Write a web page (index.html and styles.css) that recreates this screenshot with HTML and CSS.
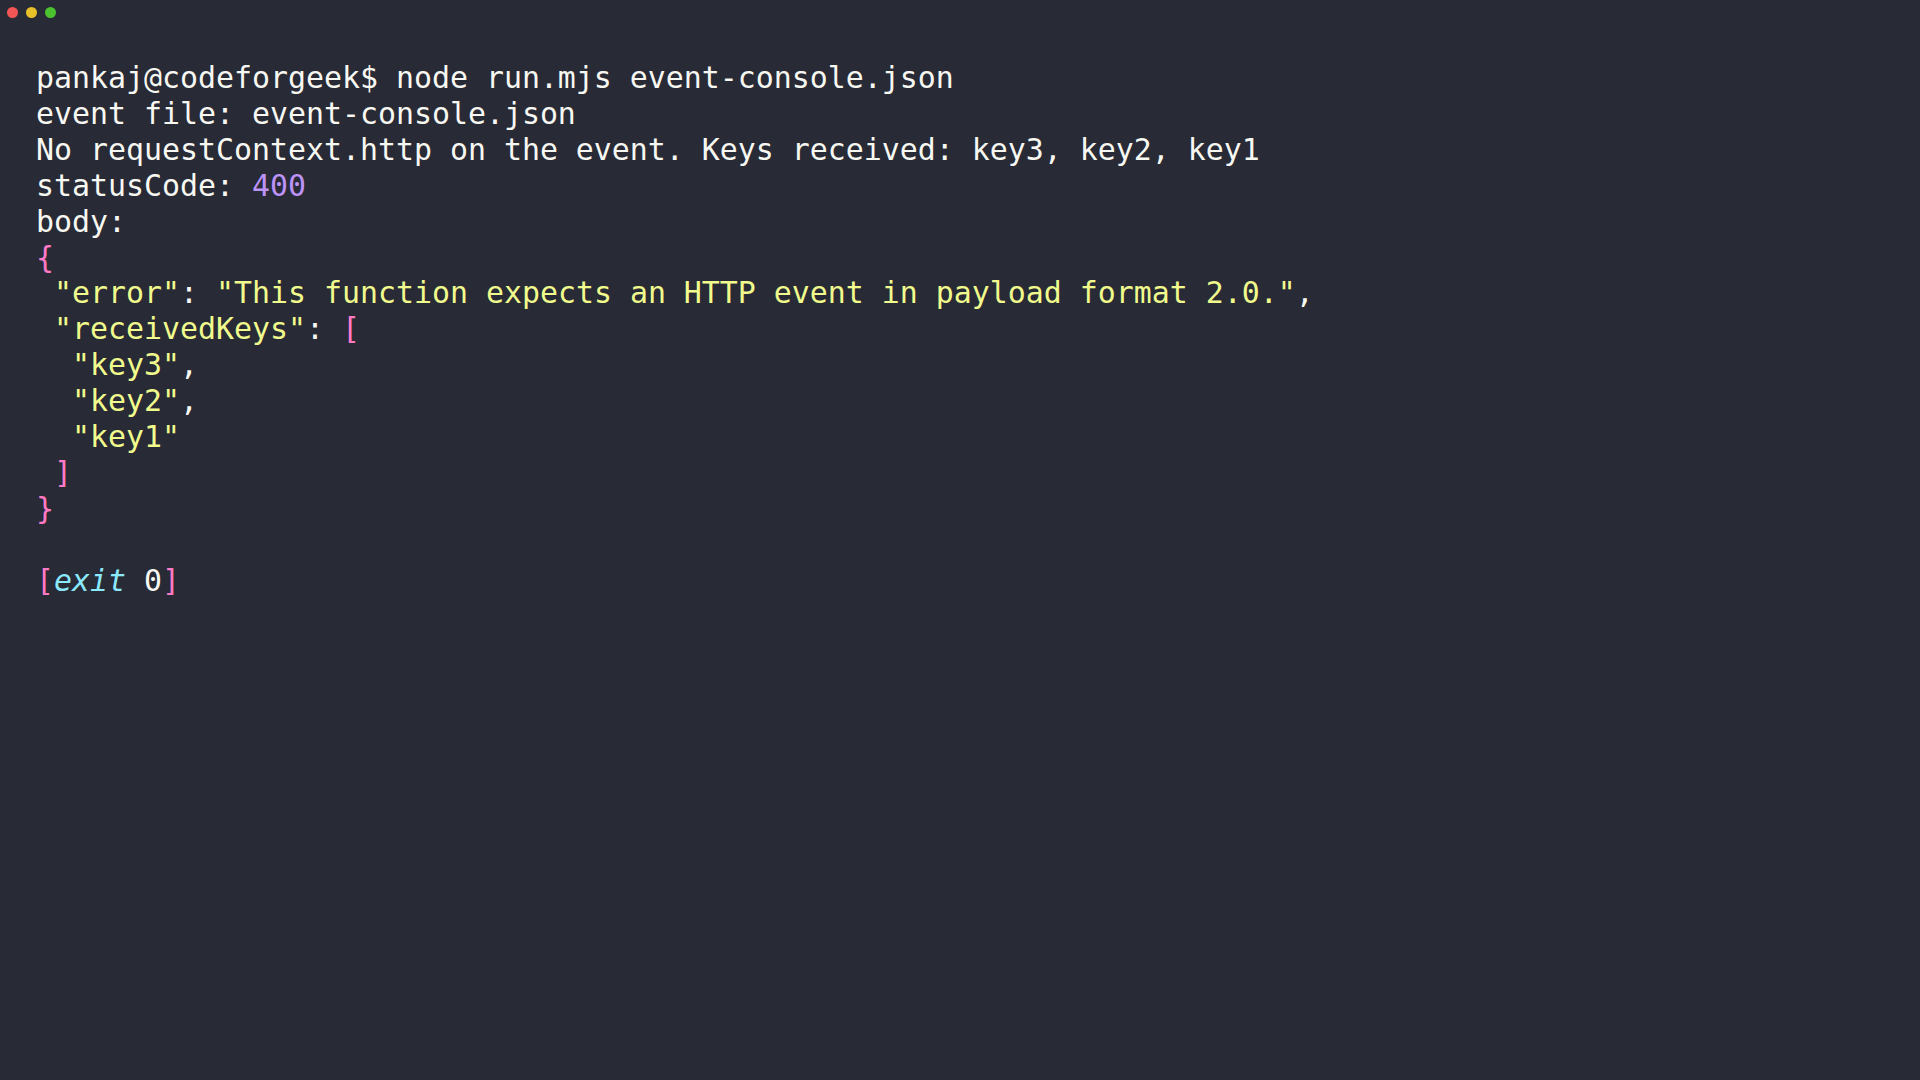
FILE: index.html
```html
<!DOCTYPE html>
<html lang="en">
<head>
<meta charset="utf-8">
<title>Terminal</title>
<link rel="stylesheet" href="styles.css">
</head>
<body>
<div class="window">
  <div class="titlebar">
    <span class="dot red"></span>
    <span class="dot yellow"></span>
    <span class="dot green"></span>
  </div>
  <pre class="term"><span class="fg">pankaj@codeforgeek$ node run.mjs event-console.json</span>
<span class="fg">event file: event-console.json</span>
<span class="fg">No requestContext.http on the event. Keys received: key3, key2, key1</span>
<span class="fg">statusCode: </span><span class="num">400</span>
<span class="fg">body:</span>
<span class="pink">{</span>
 <span class="str">"error"</span><span class="fg">: </span><span class="str">"This function expects an HTTP event in payload format 2.0."</span><span class="fg">,</span>
 <span class="str">"receivedKeys"</span><span class="fg">: </span><span class="pink">[</span>
  <span class="str">"key3"</span><span class="fg">,</span>
  <span class="str">"key2"</span><span class="fg">,</span>
  <span class="str">"key1"</span>
 <span class="pink">]</span>
<span class="pink">}</span>

<span class="pink">[</span><span class="kw">exit</span> <span class="fg">0</span><span class="pink">]</span></pre>
</div>
</body>
</html>
```
FILE: styles.css
```css
html, body {
  margin: 0;
  padding: 0;
  background: #282a36;
}
.window {
  width: 1920px;
  height: 1080px;
  background: #282a36;
  overflow: hidden;
}
.titlebar {
  display: flex;
  align-items: center;
  gap: 8px;
  height: 24px;
  padding-left: 7px;
}
.dot {
  width: 11px;
  height: 11px;
  border-radius: 50%;
  display: block;
}
.red { background: #f25555; }
.yellow { background: #e8c12a; }
.green { background: #4cc231; }
.term {
  margin: 0;
  padding: 36px 0 0 36px;
  font-family: "DejaVu Sans Mono", "Liberation Mono", monospace;
  font-size: 29.9px;
  line-height: 35.9px;
  color: #f8f8f2;
  white-space: pre;
}
.fg { color: #f8f8f2; }
.num { color: #bd93f9; }
.str { color: #f1fa8c; }
.pink { color: #ff79c6; }
.kw { color: #8be9fd; font-style: italic; }
```
